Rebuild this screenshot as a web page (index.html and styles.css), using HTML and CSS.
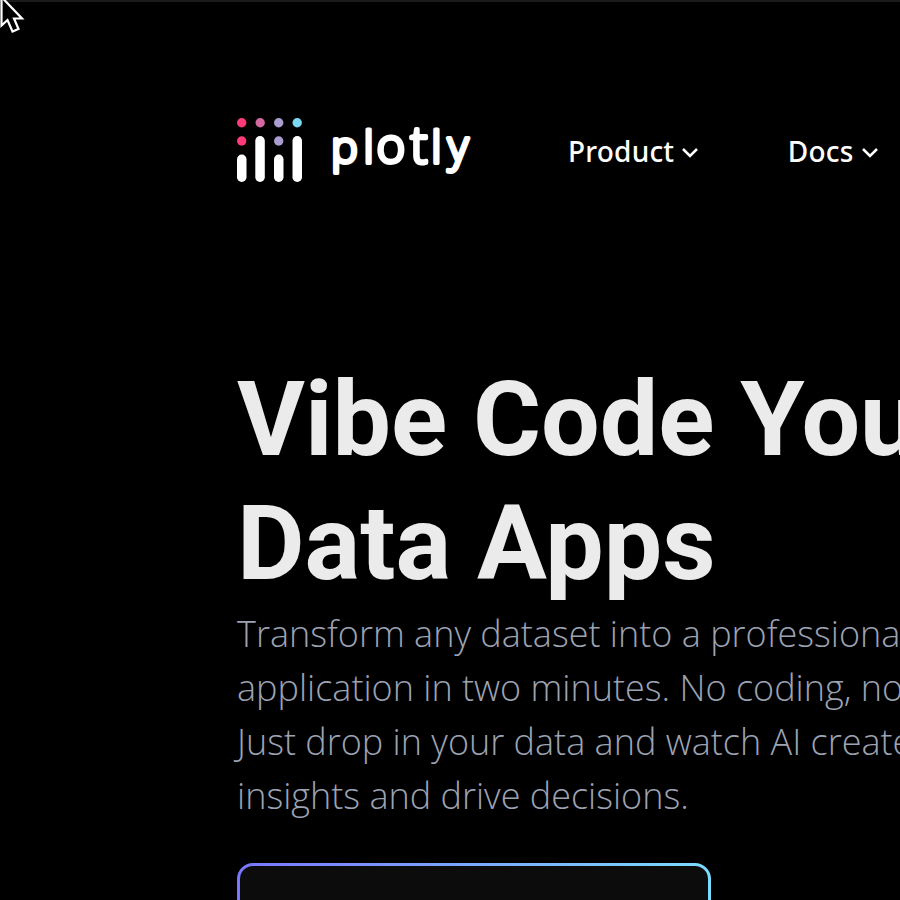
FILE: index.html
```html
<!DOCTYPE html>
<html lang="en">
<head>
<meta charset="utf-8">
<title>Plotly</title>
<link rel="stylesheet" href="styles.css">
</head>
<body>
<svg class="cursor" width="26" height="36" viewBox="0 0 26 36"><path d="M1.500-3V25.500L7.500 20 12.500 31.500 18.500 29 14 18.500H22Z" fill="#000" stroke="#fff" stroke-width="2.200"/></svg>
<header class="header">
<a class="brand" aria-label="Plotly">
<svg width="236" height="68" viewBox="0 0 236 68">
<g fill="#fff"><rect x="0" y="36.500" width="9.500" height="27.500" rx="4.700"/><rect x="18.300" y="18" width="9.500" height="46" rx="4.700"/><rect x="37" y="36.500" width="9.500" height="27.500" rx="4.700"/><rect x="55.500" y="18" width="9.500" height="46" rx="4.700"/></g>
<g fill="#ff3a78"><circle cx="4.700" cy="4.700" r="4.700"/><circle cx="4.700" cy="23" r="4.700"/></g>
<circle cx="23.200" cy="4.700" r="4.700" fill="#d46a9f"/>
<g fill="#ab9dd0"><circle cx="41.700" cy="4.700" r="4.700"/><circle cx="41.700" cy="23" r="4.700"/></g>
<circle cx="60.200" cy="4.700" r="4.700" fill="#7bd8f2"/>
<text class="wordmark" y="47"><tspan class="low" x="94" y="44.500">p</tspan><tspan class="tall" x="126.500">l</tspan><tspan x="139.500">o</tspan><tspan class="tee" x="173.500">t</tspan><tspan class="tall" x="194.200">l</tspan><tspan class="low" x="210.700" y="43.500">y</tspan></text>
</svg>
</a>
<nav class="nav">
<a>Product<svg width="18" height="12" viewBox="0 0 18 12"><path d="M2 2L9 9 16 2"/></svg></a>
<a>Docs<svg width="18" height="12" viewBox="0 0 18 12"><path d="M2 2L9 9 16 2"/></svg></a>
</nav>
</header>
<main class="hero">
<h1>Vibe Code Your<br>Data Apps</h1>
<p>Transform any dataset into a professional<br>application in two minutes. No coding, no<br>Just drop in your data and watch AI create<br>insights and drive decisions.</p>
<div class="button"></div>
</main>
</body>
</html>
```
FILE: styles.css
```css
* { box-sizing: border-box; }
html, body { margin: 0; height: 900px; overflow: hidden; }
body { background: #000; border-top: 2px solid #1b1b1b; font-family: "Open Sans", sans-serif; white-space: nowrap; }
.cursor { position: absolute; left: 0; top: 0; }
.header { display: flex; height: 356px; padding: 116px 0 0 237px; }
.brand { width: 331px; }
.brand svg { display: block; }
.wordmark { font: 300 49px "Open Sans", sans-serif; fill: #fff; stroke: #fff; stroke-width: 4px; stroke-linejoin: round; stroke-linecap: round; }
.tall { font-size: 45px; }
.tee { font-size: 51px; }
.low { font-size: 45px; }
.nav { display: flex; gap: 88.5px; color: #fff; font: 500 28px/40px "Noto Sans", sans-serif; letter-spacing: 0.2px; padding-top: 13px; height: 53px; }
.nav a { display: flex; align-items: center; gap: 7px; }
.nav svg { margin-top: 4px; fill: none; stroke: #fff; stroke-width: 2.5px; }
.hero { padding-left: 237px; }
h1 { margin: 0; color: #ebebeb; font: 700 104px/124px Roboto, sans-serif; }
p { margin: 1px 0 0; color: #9ca3b3; font-size: 36px; line-height: 54px; font-weight: 300; }
.button { width: 474px; height: 100px; margin-top: 40px; border: 3px solid transparent; border-radius: 16px; background: linear-gradient(#0c0c0c, #0c0c0c) padding-box, linear-gradient(90deg, #7a76ff, #7bdcff) border-box; }
```
